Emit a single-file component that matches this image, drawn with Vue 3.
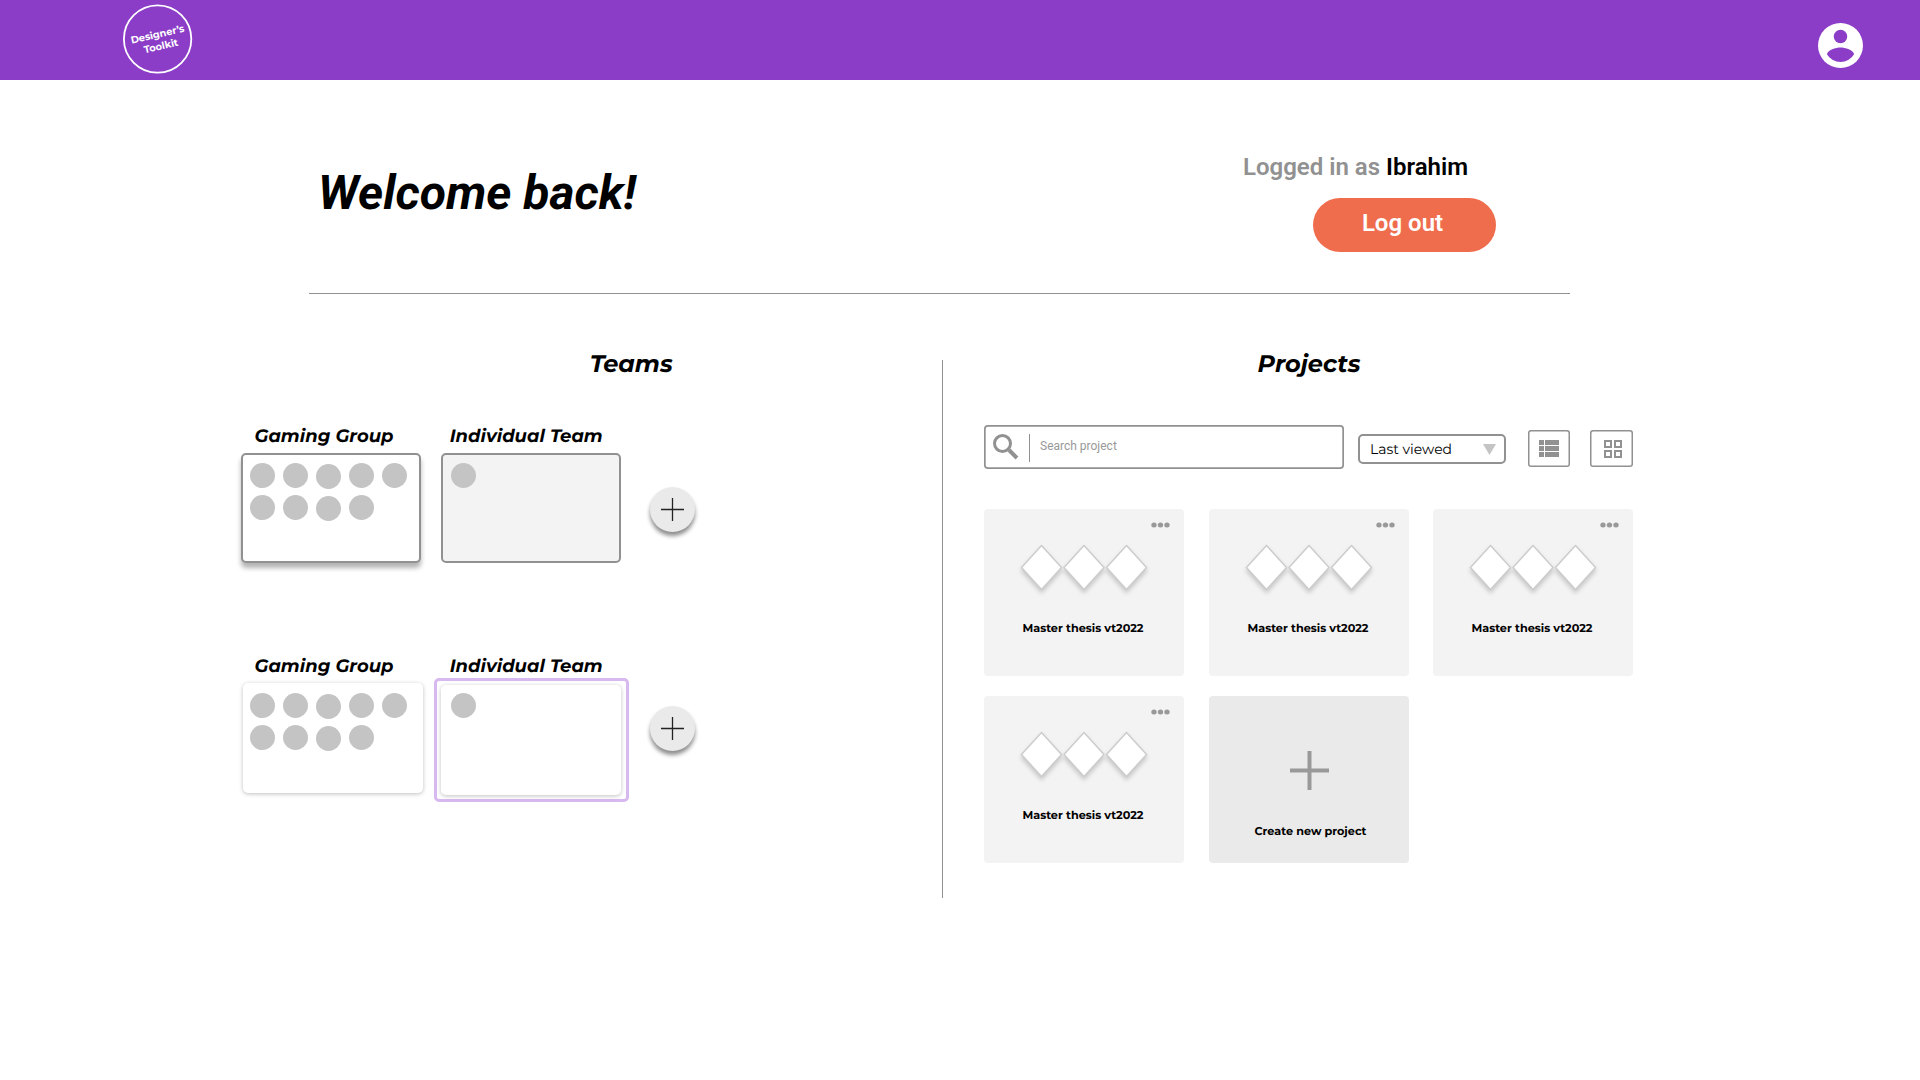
<script setup>
const teamRows = [
  { id: 'outlined', style: 'outlined' },
  { id: 'raised', style: 'raised' },
]
const groupMembers = 9
const projects = ['Master thesis vt2022', 'Master thesis vt2022', 'Master thesis vt2022', 'Master thesis vt2022']
const diamonds = [21.5, 64, 106.5]
</script>

<template>
  <div class="page">
    <header class="topbar">
      <svg class="logo" width="70" height="70" viewBox="0 0 70 70">
        <circle cx="34.6" cy="35" r="33.7" fill="none" stroke="#fff" stroke-width="1.8" />
        <g transform="rotate(-13 35 35)" class="label logo-text">
          <text x="8.3" y="33.8" textLength="54.5" lengthAdjust="spacingAndGlyphs">Designer’s</text>
          <text x="18.8" y="46" textLength="35" lengthAdjust="spacingAndGlyphs">Toolkit</text>
        </g>
      </svg>
      <svg class="avatar" width="45" height="45" viewBox="0 0 45 45">
        <circle cx="22.5" cy="22.5" r="22.5" fill="#fff" />
        <circle cx="22.5" cy="13.5" r="6.75" fill="#8b3dc7" />
        <path d="M9 31.2C9.3 27 18 24.5 22.5 24.5S35.700 27 36 31.200C33 36 28 38.900 22.500 38.900S12 36 9 31.200Z" fill="#8b3dc7" />
      </svg>
    </header>

    <section class="hero">
      <h1>Welcome back!</h1>
      <div class="session">
        <p>Logged in as <b>Ibrahim</b></p>
        <button class="logout">Log out</button>
      </div>
    </section>

    <main class="columns">
      <section class="teams">
        <svg class="label heading teams-heading" width="84" height="30">
          <text x="-0.3" y="22" textLength="83" lengthAdjust="spacingAndGlyphs">Teams</text>
        </svg>
        <div v-for="row in teamRows" :key="row.id" class="team-row" :class="row.style">
          <div class="team group">
            <svg class="label team-name" width="150" height="26">
              <text x="0.5" y="15" textLength="139" lengthAdjust="spacingAndGlyphs">Gaming Group</text>
            </svg>
            <div class="box">
              <i v-for="n in groupMembers" :key="n" class="member" :class="{ low: n % 5 === 3 }"></i>
            </div>
          </div>
          <div class="team individual">
            <svg class="label team-name" width="160" height="26">
              <text x="-0.3" y="15" textLength="153" lengthAdjust="spacingAndGlyphs">Individual Team</text>
            </svg>
            <div class="frame">
              <div class="box"><i class="member"></i></div>
            </div>
          </div>
          <button class="add">
            <svg width="23" height="23"><path d="M11.500 0V23M0 11.500H23" stroke="#222" stroke-width="1.3" /></svg>
          </button>
        </div>
      </section>

      <div class="separator"></div>

      <section class="projects">
        <svg class="label heading projects-heading" width="106" height="30">
          <text x="-0.4" y="22" textLength="103" lengthAdjust="spacingAndGlyphs">Projects</text>
        </svg>
        <div class="tools">
          <div class="search">
            <svg width="26" height="26" viewBox="0 0 26 26" fill="none" stroke="#919191">
              <circle cx="9.500" cy="9.500" r="8" stroke-width="3" />
              <path d="M16 16L24 24" stroke-width="4" />
            </svg>
            <span>Search project</span>
          </div>
          <div class="select">
            <svg class="label select-text" width="90" height="22">
              <text x="0" y="15.800" textLength="82" lengthAdjust="spacingAndGlyphs">Last viewed</text>
            </svg>
            <svg width="13" height="11"><path d="M0 0H13L6.500 11Z" fill="#c4c4c4" /></svg>
          </div>
          <button class="view list">
            <svg width="20" height="17" fill="#919191">
              <path d="M0 0H5V5H0ZM6 0H20V5H6ZM0 6H5V11H0ZM6 6H20V11H6ZM0 12H5V17H0ZM6 12H20V17H6Z" />
            </svg>
          </button>
          <button class="view grid">
            <svg width="18" height="18" fill="none" stroke="#919191" stroke-width="2">
              <path d="M1 1H7V7H1ZM11 1H17V7H11ZM1 11H7V17H1ZM11 11H17V17H11Z" />
            </svg>
          </button>
        </div>
        <div class="cards">
          <article v-for="(name, i) in projects" :key="i" class="card">
            <svg class="dots" width="19" height="6" fill="#999">
              <ellipse cx="3" cy="3" rx="2.700" ry="2.500" /><ellipse cx="9.500" cy="3" rx="2.700" ry="2.500" /><ellipse cx="16" cy="3" rx="2.700" ry="2.500" />
            </svg>
            <svg class="diamonds" width="128" height="54" fill="#fff" stroke="#cbcbcb" stroke-width="1.400">
              <path v-for="x in diamonds" :key="x" :d="`M${x} 1.500L${x + 20} 23.500L${x} 45.500L${x - 20} 23.500Z`" />
            </svg>
            <svg class="label card-name" width="124" height="18">
              <text x="0.5" y="13" textLength="121" lengthAdjust="spacingAndGlyphs">{{ name }}</text>
            </svg>
          </article>
          <article class="card create">
            <svg class="plus" width="39" height="39"><path d="M19.500 0V39M0 19.500H39" stroke="#999" stroke-width="4" /></svg>
            <svg class="label card-name" width="116" height="18">
              <text x="0.5" y="13" textLength="112" lengthAdjust="spacingAndGlyphs">Create new project</text>
            </svg>
          </article>
        </div>
      </section>
    </main>
  </div>
</template>

<style>
body { background: #fff; }
</style>

<style scoped>
* { box-sizing: border-box; }
.page { width: 1920px; height: 1080px; overflow: hidden; background: #fff; font-family: Roboto, sans-serif; color: #000; }
button { border: 0; padding: 0; font: inherit; }
svg { display: block; flex: none; }
.label { font-family: Montserrat, Inter, sans-serif; font-weight: 700; overflow: visible; text-rendering: geometricPrecision; }

.topbar { height: 80px; background: #8b3dc7; display: flex; justify-content: space-between; padding: 0 57px 0 122.500px; }
.logo { margin-top: 3.500px; }
.logo-text { font-size: 10px; fill: #fff; }
.avatar { margin-top: 23px; }

.hero { display: flex; justify-content: space-between; width: 1261px; height: 214px; margin-left: 309px; border-bottom: 1px solid #919191; }
h1 { margin: 85px 0 0 9px; font-size: 48px; line-height: 56px; font-style: italic; font-weight: 700; white-space: nowrap; }
.session { width: 328px; margin-top: 73px; font-size: 24px; font-weight: 600; line-height: 28px; }
.session p { margin: 0 0 0 1px; color: #919191; white-space: nowrap; }
.session b { color: #000; font-weight: 650; }
.logout { display: block; width: 183px; height: 54px; margin: 17px 0 0 71px; padding: 0 4px 4px 0; border-radius: 27px; background: #ef6c4d; color: #fff; font-weight: 650; }

.columns { display: flex; height: 604px; padding-top: 56px; }
.teams { width: 942px; }
.heading { font-size: 24px; font-style: italic; }
.teams-heading { margin-left: 590px; }
.team-row { display: flex; align-items: flex-start; height: 230px; margin-left: 241px; padding-top: 47px; }
.team { width: 200px; }
.team-name { margin-left: 13px; font-size: 18px; font-style: italic; }
.individual .team-name { margin-left: 9px; }
.box { display: flex; flex-wrap: wrap; align-content: flex-start; gap: 7px 8px; width: 180px; height: 110px; padding: 8px 7px; border: 2px solid #919191; border-radius: 5px; background: #fff; }
.individual .box { padding-left: 8px; }
.outlined .group .box { box-shadow: 0 5px 5px rgba(0, 0, 0, .3); }
.outlined .individual .box { background: #f3f3f3; }
.member { width: 25px; height: 25px; border-radius: 50%; background: #c4c4c4; }
.member.low { transform: translateY(1px); }
.raised .box { border: 0; padding: 10px 7px; box-shadow: 0 1px 4px rgba(0, 0, 0, .25); }
.raised .group .box { margin-left: 2px; }
.raised .individual .box { padding: 8px 10px; }
.raised .frame { width: 195px; height: 124px; margin: -5px 0 0 -7px; padding: 4px; border: 3px solid #d8b9ef; border-radius: 5px; }
.add { display: flex; align-items: center; justify-content: center; width: 45px; height: 45px; margin: 60px 0 0 9.400px; border-radius: 50%; background: #eaeaea; box-shadow: 0 4px 4px rgba(0, 0, 0, .45); }
.raised .add { margin-top: 49px; }

.separator { width: 1px; height: 538px; margin-top: 10px; background: #919191; }
.projects { width: 690px; padding-left: 41px; }
.projects-heading { margin-left: 274px; }
.tools { display: flex; align-items: flex-start; margin-top: 45px; height: 84px; }
.search { display: flex; width: 360px; height: 44px; padding: 9px; border-radius: 4px; box-shadow: inset 0 0 0 1.700px #919191; }
.search span { height: 28px; margin-left: 10px; padding-left: 10px; border-left: 1px solid #919191; color: #999; font-size: 12px; line-height: 25px; }
.select { display: flex; align-items: center; justify-content: space-between; width: 149px; height: 30px; margin: 9px 0 0 14px; padding: 0 8px 0 10px; border: 2px solid #919191; border-radius: 5px; }
.select-text { font-size: 14px; font-weight: 400; }
.view { display: flex; align-items: center; justify-content: center; width: 42px; height: 37px; margin: 5px 0 0 21.300px; border-radius: 3px; background: #fff; box-shadow: inset 0 0 0 1.500px #919191; }
.view.grid { width: 43px; padding-left: 2px; margin-left: 20.500px; }
.cards { display: grid; grid-template-columns: repeat(3, 200px); gap: 20px 24.500px; }
.card { height: 167px; border-radius: 4px; background: #f3f3f3; }
.dots { margin: 13px 0 0 167px; }
.diamonds { margin: 16px 0 0 36.400px; filter: drop-shadow(0 3px 2px rgba(0, 0, 0, .18)); }
.card-name { margin: 21px 0 0 38px; font-size: 11.300px; }
.create { background: #eaeaea; }
.plus { margin: 54.500px 0 0 81px; }
.create .card-name { margin: 32px 0 0 45px; }
</style>
